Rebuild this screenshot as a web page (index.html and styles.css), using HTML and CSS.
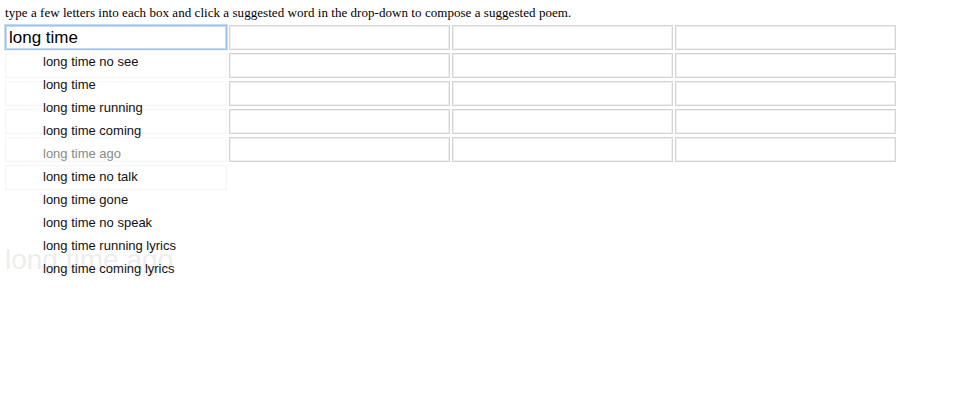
FILE: index.html
```html
<!DOCTYPE html>
<html>
<head>
<meta charset="utf-8">
<link rel="stylesheet" href="styles.css">
</head>
<body>
<p class="intro">type a few letters into each box and click a suggested word in the drop-down to compose a suggested poem.</p>
<div class="board">
  <div class="col first">
    <div class="box focused">long time</div>
    <div class="box"></div>
    <div class="box"></div>
    <div class="box"></div>
    <div class="box"></div>
    <div class="box"></div>
    <ul class="dropdown">
      <li>long time no see</li>
      <li>long time</li>
      <li>long time running</li>
      <li>long time coming</li>
      <li class="dim">long time ago</li>
      <li>long time no talk</li>
      <li>long time gone</li>
      <li>long time no speak</li>
      <li>long time running lyrics</li>
      <li>long time coming lyrics</li>
    </ul>
  </div>
  <div class="col">
    <div class="box"></div><div class="box"></div><div class="box"></div><div class="box"></div><div class="box"></div>
  </div>
  <div class="col">
    <div class="box"></div><div class="box"></div><div class="box"></div><div class="box"></div><div class="box"></div>
  </div>
  <div class="col">
    <div class="box"></div><div class="box"></div><div class="box"></div><div class="box"></div><div class="box"></div>
  </div>
</div>
<div class="poem">long time ago</div>
</body>
</html>
```
FILE: styles.css
```css
html, body { background: #fff; }
body {
  margin: 0;
  padding: 5px 5px;
  font-family: "Liberation Sans", Arial, sans-serif;
  color: #000;
}
.intro {
  margin: 0 0 5px 0;
  font-family: "Liberation Serif", "Times New Roman", serif;
  font-size: 13px;
  line-height: 15px;
  letter-spacing: 0.05px;
}
.board {
  display: flex;
  gap: 2px;
  align-items: flex-start;
}
.col {
  width: 221px;
  display: flex;
  flex-direction: column;
  gap: 3px;
}
.col.first {
  position: relative;
  width: 222px;
}
.box {
  height: 25px;
  box-sizing: border-box;
  border: 1px solid #d4d4d4;
  box-shadow: inset 0 0 0 1px #efefef;
  background: #fff;
}
.box.focused {
  border: 1px solid #9cc3ee;
  box-shadow: 0 0 0 1px #c3dbf6, inset 0 0 0 1px #c3dbf6;
  font-size: 17px;
  line-height: 23px;
  padding-left: 3px;
  color: #000;
}
.dropdown {
  position: absolute;
  left: 0;
  top: 25px;
  width: 223px;
  margin: 0;
  padding: 0;
  list-style: none;
  background: rgba(255, 255, 255, 0.82);
  z-index: 2;
}
.dropdown li {
  height: 23px;
  line-height: 23px;
  font-size: 13px;
  padding-left: 38px;
  color: #111;
}
.dropdown li.dim {
  color: #8a8a8a;
}
.poem {
  margin-top: 55px;
  font-size: 28px;
  line-height: 30px;
  color: #999;
}
```
